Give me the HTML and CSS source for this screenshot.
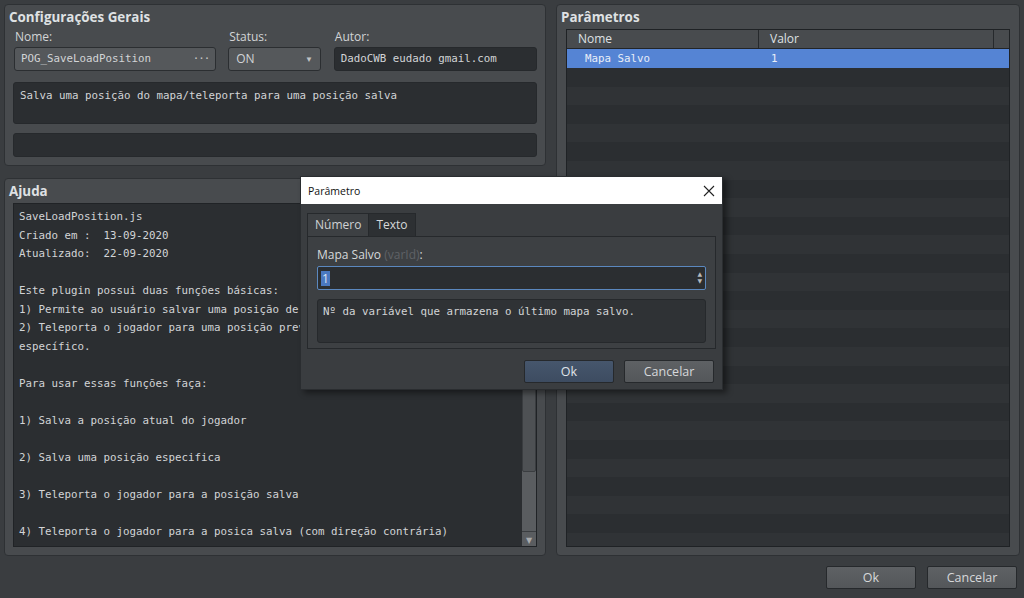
FILE: index.html
```html
<!DOCTYPE html>
<html>
<head>
  <meta charset="utf-8">
  <title>Gerenciador de Plugins</title>
  <link rel="stylesheet" href="styles.css">
</head>
<body>
  <div class="app">
    <div class="panel general">
      <div class="panel-title">Configurações Gerais</div>
      <div class="fields">
        <div class="field f-name">
          <label>Nome:</label>
          <div class="box">POG_SaveLoadPosition<span class="dots">···</span></div>
        </div>
        <div class="field f-status">
          <label>Status:</label>
          <div class="box combo">ON<span class="arrow">▼</span></div>
        </div>
        <div class="field f-author">
          <label>Autor:</label>
          <div class="box dark mono">DadoCWB eudado gmail.com</div>
        </div>
      </div>
      <div class="desc mono">Salva uma posição do mapa/teleporta para uma posição salva</div>
      <div class="extra"></div>
    </div>

    <div class="panel params">
      <div class="panel-title">Parâmetros</div>
      <div class="table">
        <div class="thead">
          <div class="th c-name">Nome</div>
          <div class="th c-value">Valor</div>
          <div class="th c-end"></div>
        </div>
        <div class="row selected mono">
          <div class="td c-name">Mapa Salvo</div>
          <div class="td c-value">1</div>
        </div>
        <div class="rows"></div>
      </div>
    </div>

    <div class="panel help">
      <div class="panel-title">Ajuda</div>
      <div class="help-box">
        <pre class="help-text mono">SaveLoadPosition.js
Criado em :  13-09-2020
Atualizado:  22-09-2020

Este plugin possui duas funções básicas:
1) Permite ao usuário salvar uma posição de um mapa.
2) Teleporta o jogador para uma posição previamente salva em um local
específico.

Para usar essas funções faça:

1) Salva a posição atual do jogador

2) Salva uma posição especifica

3) Teleporta o jogador para a posição salva

4) Teleporta o jogador para a posica salva (com direção contrária)</pre>
        <div class="vscroll">
          <div class="thumb"></div>
          <div class="down">▼</div>
        </div>
      </div>
    </div>

    <div class="footer">
      <button class="btn">Ok</button>
      <button class="btn">Cancelar</button>
    </div>
  </div>

  <div class="dialog">
    <div class="dlg-title">
      <span>Parâmetro</span>
      <svg class="close" width="12" height="12" viewBox="0 0 12 12"><path d="M1 1L11 11M11 1L1 11" stroke="#222" stroke-width="1.1" fill="none"/></svg>
    </div>
    <div class="dlg-body">
      <div class="tabs">
        <div class="tab active">Número</div>
        <div class="tab">Texto</div>
      </div>
      <div class="tab-pane">
        <div class="p-label">Mapa Salvo <span class="hint">(varId)</span>:</div>
        <div class="spin"><span class="sel">1</span><span class="spin-arrows"><i>▲</i><i>▼</i></span></div>
        <div class="p-desc mono">Nº da variável que armazena o último mapa salvo.</div>
      </div>
      <div class="dlg-buttons">
        <button class="btn primary">Ok</button>
        <button class="btn">Cancelar</button>
      </div>
    </div>
  </div>
</body>
</html>
```

FILE: styles.css
```css
* { box-sizing: border-box; margin: 0; padding: 0; }
body { background: #3a3d40; font-family: "Open Sans", "DejaVu Sans", sans-serif; font-size: 12px; color: #d2d4d6; width: 1024px; height: 598px; overflow: hidden; position: relative; }
.mono { font-family: "DejaVu Sans Mono", monospace; font-size: 10.8px; }

.app { display: grid; grid-template-columns: 542px 464px; grid-template-rows: 162px 378px auto; column-gap: 10px; row-gap: 12px; padding: 4px 4px 0 4px; height: 598px; }
.general { grid-column: 1; grid-row: 1; }
.help    { grid-column: 1; grid-row: 2; }
.params  { grid-column: 2; grid-row: 1 / 3; }
.footer  { grid-column: 1 / 3; grid-row: 3; margin-top: -2px; display: flex; justify-content: flex-end; align-items: flex-start; gap: 11px; padding-right: 3px; }

.panel { background: #484b4e; border: 1px solid #2e3134; border-radius: 4px; display: flex; flex-direction: column; padding: 0 8px 8px 8px; }
.panel-title { font-weight: bold; font-size: 13.4px; color: #dfe1e3; height: 24px; line-height: 24px; margin-left: -4px; }

.fields { display: flex; gap: 12px; padding-left: 1px; }
.field label { display: block; height: 18px; line-height: 16px; padding-left: 1px; }
.f-name { width: 203px; }
.f-status { width: 93px; }
.f-author { width: 204px; margin-left: 1px; }
.box { height: 24px; border: 1px solid #2b2e31; border-radius: 3px; background: #55585b; font-family: "DejaVu Sans Mono", monospace; font-size: 10.8px; line-height: 22px; padding: 0 6px; display: flex; justify-content: space-between; color: #d2d4d6; }
.box.combo { font-family: "Open Sans", sans-serif; font-size: 12px; padding: 0 7px 0 7px; }
.box.dark { background: #2b2e31; border-color: #26292c; }
.dots { color: #c8c8c8; letter-spacing: -1px; }
.arrow { font-size: 8px; color: #c0c2c4; }

.desc { margin-top: 11px; height: 45px; background: #2b2e31; border: 1px solid #26292c; border-radius: 3px; padding: 6px 6px; }
.extra { margin-top: 9px; height: 26px; background: #2b2e31; border: 1px solid #26292c; border-radius: 3px; }

.help-box { flex: 1; background: #2b2e31; border: 1px solid #202326; display: flex; overflow: hidden; }
.help-text { flex: 1; padding: 4px 5px; line-height: 18.55px; white-space: pre; overflow: hidden; color: #d2d4d6; font-size: 10.8px; }
.vscroll { width: 15px; background: #5a5d60; display: flex; flex-direction: column; border-left: 1px solid #2b2e31; }
.thumb { margin-top: 10px; height: 258px; background: #4e5154; border: 1px solid #3a3d40; border-radius: 2px; }
.down { margin-top: auto; height: 15px; font-size: 8px; text-align: center; line-height: 15px; color: #a8aaac; border-top: 1px solid #3a3d40; }

.table { flex: 1; background: #2c2f32; border: 1px solid #1f2225; display: flex; flex-direction: column; margin: 0 1px; }
.thead { display: flex; height: 19px; background: #484b4e; border-bottom: 1px solid #222528; }
.th { line-height: 18px; padding-left: 11px; color: #dfe1e3; }
.c-name { width: 192px; border-right: 1px solid #26292c; }
.c-value { flex: 1; border-right: 1px solid #26292c; }
.c-end { width: 15px; padding: 0; border-right: none; }
.row { display: flex; height: 19px; background: #5584d4; color: #e8eef8; }
.td { line-height: 19px; padding-left: 18px; border: none; }
.row .c-value { padding-left: 12px; }
.rows { flex: 1; background: repeating-linear-gradient(#2b2e31 0, #2b2e31 18.6px, #303336 18.6px, #303336 37.2px); }

.btn { width: 90px; height: 23px; background: linear-gradient(#5e6164, #54575a); border: 1px solid #26292c; border-radius: 2px; color: #d6d8da; font-family: "Open Sans", sans-serif; font-size: 12.5px; }
.btn.primary { background: linear-gradient(#46566c, #3d4c61); color: #e0e4ea; }

.dialog { position: absolute; left: 300px; top: 176px; width: 423px; height: 214px; background: #3a3d40; box-shadow: 4px 3px 6px rgba(0,0,0,0.45); border: 1px solid #2a2d30; display: flex; flex-direction: column; }
.dlg-title { height: 27px; background: #ffffff; color: #111; font-size: 10.5px; display: flex; align-items: center; justify-content: space-between; padding: 0 7px 0 7px; font-family: "Open Sans", sans-serif; }
.dlg-body { flex: 1; padding: 9px 6px 0 6px; display: flex; flex-direction: column; }
.tabs { display: flex; height: 23px; }
.tab { padding: 0 7px; line-height: 21px; border: 1px solid #26292c; border-bottom: none; background: #2d3033; color: #d6d8da; font-size: 12px; }
.tab.active { background: #3d4043; border-right: none; color: #cfd1d3; }
.tab-pane { height: 113px; border: 1px solid #26292c; background: #3d4043; padding: 10px 9px 0 9px; }
.p-label { height: 19px; line-height: 16px; color: #d6d8da; }
.hint { color: #5f6266; }
.spin { height: 24px; background: #2b2e31; border: 1px solid #5b88bf; border-radius: 2px; display: flex; align-items: center; justify-content: space-between; padding: 0 3px; }
.sel { background: #4a78c0; color: #dfe6f3; line-height: 15px; padding: 0 1px; font-size: 12px; }
.spin-arrows { display: flex; flex-direction: column; font-size: 6px; line-height: 7px; color: #b8babc; }
.spin-arrows i { font-style: normal; }
.p-desc { margin-top: 9px; height: 44px; background: #2f3235; border: 1px solid #26292c; border-radius: 3px; padding: 5px 5px; }
.dlg-buttons { display: flex; justify-content: flex-end; gap: 10px; padding: 11px 2px 0 0; }
```
